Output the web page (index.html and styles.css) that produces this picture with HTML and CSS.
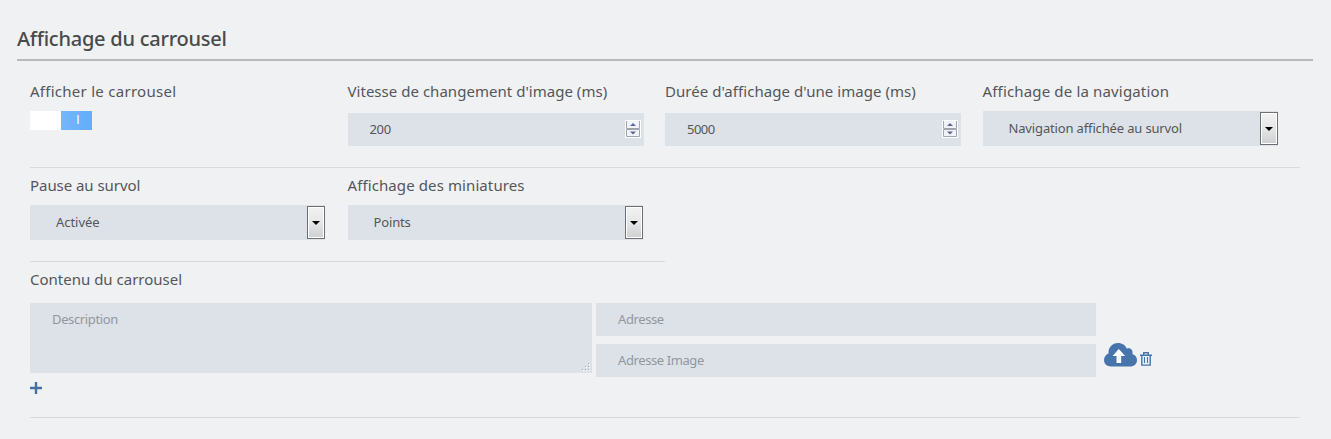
FILE: index.html
```html
<!DOCTYPE html>
<html lang="fr">
<head>
<meta charset="utf-8">
<title>Affichage du carrousel</title>
<link rel="stylesheet" href="styles.css">
</head>
<body>
<main class="panel">
  <h1 class="title"><span>Affichage du carrousel</span></h1>
  <div class="rows">
    <section class="row">
      <div class="cell"><div class="label l1">Afficher le carrousel</div>
        <div class="switch"><span class="off"></span><span class="on">I</span></div></div>
      <div class="cell"><div class="label l2">Vitesse de changement d'image (ms)</div>
        <div class="number"><span class="n1">200</span>
          <svg class="spin" width="16" height="18" viewBox="0 0 16 18"><path fill="#fff" d="M0 0h16v18H0z"/><path fill="#f2f3f8" stroke="#a0a4ae" d="M1.500 1v7.500h13V1M1.500 9.500h13v7h-13z"/><path fill="#596596" d="M5 6l3-3 3 3zM5 11.500h6l-3 3z"/></svg></div></div>
      <div class="cell"><div class="label l3">Durée d'affichage d'une image (ms)</div>
        <div class="number"><span class="n2">5000</span>
          <svg class="spin" width="16" height="18" viewBox="0 0 16 18"><path fill="#fff" d="M0 0h16v18H0z"/><path fill="#f2f3f8" stroke="#a0a4ae" d="M1.500 1v7.500h13V1M1.500 9.500h13v7h-13z"/><path fill="#596596" d="M5 6l3-3 3 3zM5 11.500h6l-3 3z"/></svg></div></div>
      <div class="cell"><div class="label l4">Affichage de la navigation</div>
        <div class="select"><span class="v1">Navigation affichée au survol</span><i class="arrow"></i></div></div>
    </section>
    <section class="row short">
      <div class="cell"><div class="label l5">Pause au survol</div>
        <div class="select"><span class="v2">Activée</span><i class="arrow"></i></div></div>
      <div class="cell"><div class="label l6">Affichage des miniatures</div>
        <div class="select"><span class="v3">Points</span><i class="arrow"></i></div></div>
    </section>
    <section class="content">
      <div class="label l7">Contenu du carrousel</div>
      <div class="entry">
        <div class="area"><span>Description</span>
          <svg class="grip" width="9" height="9" viewBox="0 0 9 9"><path fill="#a5a9ae" d="M7 0h1v1H7zM4 3h1v1H4zM7 3h1v1H7zM1 6h1v1H1zM4 6h1v1H4zM7 6h1v1H7z"/><path fill="#fff" d="M8 1h1v1H8zM5 4h1v1H5zM8 4h1v1H8zM2 7h1v1H2zM5 7h1v1H5zM8 7h1v1H8z"/></svg></div>
        <div class="urls"><div class="input"><span class="p1">Adresse</span></div><div class="input"><span class="p2">Adresse Image</span></div></div>
        <div class="actions">
          <svg class="cloud" width="33" height="24" viewBox="0 0 33 24"><path fill="#4674ab" d="M7 23.500C3 23.500 0 20.700 0 17c0-3 1.700-5.400 4.500-6.600C4.200 4.500 8.300 0 14 0c4.200 0 7.300 2.200 8.800 5.700C26 4 29.500 7 28.400 11c2.800.8 4.600 3.200 4.600 6.200 0 3.600-2.900 6.300-6.800 6.300z"/><path fill="#fff" d="M14.800 6l6.400 7h-4v7h-4.700v-7h-4z"/></svg>
          <svg class="trash" width="12" height="14" viewBox="0 0 12 14" fill="none" stroke="#4674ab"><path stroke-width="1.400" d="M0 3.200h12M3.700 3V.8h4.600V3M1.800 3.200v9.900h8.400V3.200"/><path stroke-width="1.100" d="M4.500 5v6M7.500 5v6"/></svg>
        </div>
      </div>
      <svg class="plus" width="12" height="12" viewBox="0 0 12 12"><path stroke="#4471a2" stroke-width="2.400" d="M0 6h12M6 0v12"/></svg>
    </section>
  </div>
</main>
</body>
</html>
```
FILE: styles.css
```css
* { box-sizing: border-box; }
body { margin: 0; background: #f0f1f3; color: #53565a; font-family: "Noto Sans", sans-serif; }
.panel { padding: 21px 18px 0 17px; height: 439px; overflow: hidden; }
.title { margin: 0; height: 40px; border-bottom: 2px solid #b8babe; font-size: 20px; line-height: 36px; font-weight: 500; color: #484a4b; white-space: nowrap; letter-spacing: -.24px; }
.rows { padding: 13px 13px 0; }
.row { display: grid; grid-template-columns: repeat(4, 317.5px); height: 94px; border-bottom: 1px solid #d8dade; width: 1270px; }
.short { grid-template-columns: repeat(2, 317.5px); width: 635px; }
.cell { padding-right: 21.5px; }
.label { height: 37px; line-height: 34px; font-size: 15px; white-space: nowrap; width: max-content; }
.l1 { letter-spacing: .27px; }
.l2 { letter-spacing: .03px; }
.l3 { letter-spacing: .05px; }
.l4 { letter-spacing: .16px; }
.l5 { letter-spacing: -.05px; }
.l6 { letter-spacing: .1px; }
.switch { display: flex; width: 62px; height: 19px; }
.off { width: 31px; background: #fff; }
.on { width: 31px; background: linear-gradient(90deg, #77b6fb, #62adfc); color: #fff; font-family: "Liberation Sans", sans-serif; font-size: 12px; line-height: 19px; text-align: center; padding-left: 3px; }
.number, .input { display: flex; align-items: center; height: 33px; background: #dde2e9; padding-left: 22px; font-size: 13px; }
.number { margin-top: 2px; padding-right: 3px; justify-content: space-between; }
.number span, .input span, .select span { padding-bottom: 2px; }
.n1 { letter-spacing: -.35px; }
.n2 { letter-spacing: -.5px; }
.spin { margin-top: -2px; }
.select { display: flex; align-items: center; justify-content: space-between; height: 35px; background: #dde2e9; padding-left: 26px; font-size: 13px; margin-right: .6px; }
.v1, .v3 { letter-spacing: -.15px; }
.v2 { letter-spacing: -.05px; }
.arrow { display: flex; align-items: center; justify-content: center; width: 18px; height: 33px; border: 1px solid #6d6f72; box-shadow: inset 0 0 0 1px #fff; background: linear-gradient(#f2f2f2, #e6e6e7 50%, #cecfd0); }
.arrow::after { content: ""; border: 4px solid transparent; border-top-color: #000; border-bottom: 0; }
.content { height: 156px; border-bottom: 1px solid #d8dade; }
.content .label { height: 41px; }
.entry { display: flex; gap: 4px; }
.area { width: 562px; height: 70px; background: #dde2e9; padding: 7px 2px 1px 22px; font-size: 13px; line-height: 18px; color: #92979c; letter-spacing: -.36px; display: flex; justify-content: space-between; align-items: flex-start; }
.grip { align-self: flex-end; }
.urls { display: flex; flex-direction: column; gap: 8px; width: 500px; }
.input { color: #92979c; letter-spacing: -.4px; }
.actions { display: flex; gap: 3px; padding: 40px 0 0 4px; align-items: flex-start; }
.trash { margin-top: 9px; }
.plus { display: block; margin-top: 5px; }
```
